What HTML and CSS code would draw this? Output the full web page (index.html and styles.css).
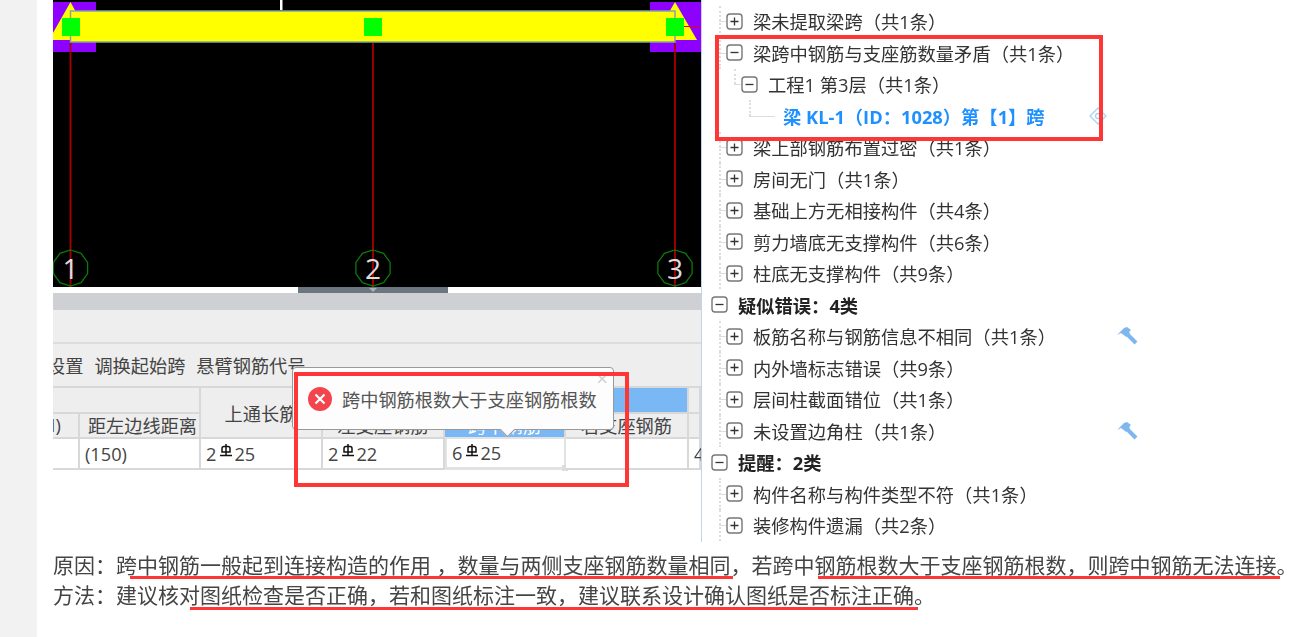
FILE: index.html
```html
<!DOCTYPE html>
<html lang="zh-CN">
<head>
    <meta charset="UTF-8">
    <title>梁跨中钢筋与支座筋数量矛盾</title>
    <link rel="stylesheet" href="styles.css">
</head>
<body>
    <svg class="defs" width="0" height="0">
        <symbol id="plus" viewBox="0 0 17 17">
            <rect x="1" y="1" width="15" height="15" rx="3" fill="#fff" stroke="#777" stroke-width="1.4"/>
            <path d="M4.5 8.5h8M8.5 4.5v8" stroke="#333" stroke-width="1.3"/>
        </symbol>
        <symbol id="minus" viewBox="0 0 17 17">
            <rect x="1" y="1" width="15" height="15" rx="3" fill="#fff" stroke="#777" stroke-width="1.4"/>
            <path d="M4.5 8.5h8" stroke="#333" stroke-width="1.3"/>
        </symbol>
        <symbol id="hammer" viewBox="0 0 21 18">
            <path d="M0 8 L7 1 L10 0 L14 3 L12 5 L13 6 L9 10 L8 9 L4 6 Z" fill="#7db7ee"/>
            <path d="M9 6 L19 16" stroke="#7db7ee" stroke-width="4"/>
        </symbol>
        <symbol id="rebar" viewBox="0 0 14 14">
            <path d="M3 8V4.500Q3 2.500 5 2.500H9Q11 2.500 11 4.500V8H3ZM7 0V11M1 11.500H13" fill="none" stroke="#111" stroke-width="1.500"/>
        </symbol>
        <symbol id="axis-ring" viewBox="-19 -19 38 38">
            <polygon points="0,-18 10.600,-14.600 17.100,-5.600 17.100,5.600 10.600,14.600 0,18 -10.600,14.600 -17.100,5.600 -17.100,-5.600 -10.600,-14.600" fill="none" stroke="#0a7a0a" stroke-width="1.300"/>
        </symbol>
    </svg>

    <div class="strip"></div>

    <div class="main">
        <div class="top">
            <div class="left">
                <svg class="cad" width="648" height="287" viewBox="0 0 648 287">
                    <rect width="648" height="287" fill="#000"/>
                    <rect x="227" width="2.500" height="10" fill="#fff"/>
                    <rect y="2" width="43" height="50" fill="#8e00ff"/>
                    <rect x="597" y="2" width="51" height="50" fill="#8e00ff"/>
                    <path d="M17.500 2 L38 40 H-4 Z" fill="#ff0"/>
                    <path d="M622 2 L644 40 H600 Z" fill="#ff0"/>
                    <rect x="17.500" y="11" width="604.500" height="31" fill="#ff0" stroke="#7fa6a0" stroke-width="1.500"/>
                    <rect x="9" y="18" width="18" height="18" fill="#0f0"/>
                    <rect x="311" y="18" width="18" height="18" fill="#0f0"/>
                    <rect x="613" y="18" width="18" height="18" fill="#0f0"/>
                    <path d="M631 26.500H647" stroke="#e00" stroke-width="1"/>
                    <path d="M17.500 43V287M622 43V287" stroke="#a80000" stroke-width="1.800"/>
                    <path d="M320 43V287" stroke="#ff0000" stroke-width="1.200"/>
                    <use href="#axis-ring" x="-1.500" y="249" width="38" height="38"/>
                    <use href="#axis-ring" x="301" y="249" width="38" height="38"/>
                    <use href="#axis-ring" x="603" y="249" width="38" height="38"/>
                    <g class="axis">
                        <text x="17.500" y="279">1</text>
                        <text x="320" y="279">2</text>
                        <text x="622" y="279">3</text>
                    </g>
                </svg>

                <div class="scroll"><div class="thumb"></div></div>
                <div class="greybar"></div>
                <div class="blank"></div>
                <div class="toolbar">
                    <span class="clip-first">设置</span>
                    <span>调换起始跨</span>
                    <span>悬臂钢筋代号</span>
                </div>

                <div class="table">
                    <div class="cell span2"></div>
                    <div class="cell tall">上通长筋</div>
                    <div class="cell blue span3"></div>
                    <div class="cell"></div>

                    <div class="cell cut"><span>H)</span></div>
                    <div class="cell nudge">距左边线距离</div>
                    <div class="cell">左支座钢筋</div>
                    <div class="cell blue light">跨中钢筋</div>
                    <div class="cell">右支座钢筋</div>
                    <div class="cell"></div>

                    <div class="cell data"></div>
                    <div class="cell data">(150)</div>
                    <div class="cell data">2<svg class="rebar"><use href="#rebar"/></svg>25</div>
                    <div class="cell data">2<svg class="rebar"><use href="#rebar"/></svg>22</div>
                    <div class="cell data picked">6<svg class="rebar"><use href="#rebar"/></svg>25<i class="handle"></i></div>
                    <div class="cell data"></div>
                    <div class="cell data">4</div>
                </div>

                <div class="tip">
                    <svg class="tip-icon" width="24" height="24" viewBox="0 0 24 24">
                        <circle cx="12" cy="12" r="12" fill="#f4454e"/>
                        <path d="M7.500 7.500L16.500 16.500M16.500 7.500L7.500 16.500" stroke="#fff" stroke-width="2.200"/>
                    </svg>
                    <span>跨中钢筋根数大于支座钢筋根数</span>
                    <span class="tip-close">×</span>
                    <i class="tip-arrow"></i>
                </div>
            </div>

            <div class="tree">
                <div class="row l1"><svg class="box"><use href="#plus"/></svg>梁未提取梁跨（共1条）</div>
                <div class="row l1"><svg class="box"><use href="#minus"/></svg>梁跨中钢筋与支座筋数量矛盾（共1条）</div>
                <div class="row l2"><svg class="box"><use href="#minus"/></svg>工程1 第3层（共1条）</div>
                <div class="row l3 link">梁 KL-1（ID：1028）第【1】跨
                    <svg class="locate" width="18" height="18" viewBox="0 0 18 18">
                        <path d="M9 1L17 9L9 17L1 9Z" fill="none" stroke="#a9d0f5" stroke-width="1.300"/>
                        <circle cx="9" cy="9" r="2.500" fill="none" stroke="#a9d0f5" stroke-width="1.300"/>
                    </svg>
                </div>
                <div class="row l1"><svg class="box"><use href="#plus"/></svg>梁上部钢筋布置过密（共1条）</div>
                <div class="row l1"><svg class="box"><use href="#plus"/></svg>房间无门（共1条）</div>
                <div class="row l1"><svg class="box"><use href="#plus"/></svg>基础上方无相接构件（共4条）</div>
                <div class="row l1"><svg class="box"><use href="#plus"/></svg>剪力墙底无支撑构件（共6条）</div>
                <div class="row l1"><svg class="box"><use href="#plus"/></svg>柱底无支撑构件（共9条）</div>
                <div class="row l0"><svg class="box"><use href="#minus"/></svg>疑似错误：4类</div>
                <div class="row l1"><svg class="box"><use href="#plus"/></svg>板筋名称与钢筋信息不相同（共1条）<svg class="fix"><use href="#hammer"/></svg></div>
                <div class="row l1"><svg class="box"><use href="#plus"/></svg>内外墙标志错误（共9条）</div>
                <div class="row l1"><svg class="box"><use href="#plus"/></svg>层间柱截面错位（共1条）</div>
                <div class="row l1"><svg class="box"><use href="#plus"/></svg>未设置边角柱（共1条）<svg class="fix"><use href="#hammer"/></svg></div>
                <div class="row l0"><svg class="box"><use href="#minus"/></svg>提醒：2类</div>
                <div class="row l1"><svg class="box"><use href="#plus"/></svg>构件名称与构件类型不符（共1条）</div>
                <div class="row l1"><svg class="box"><use href="#plus"/></svg>装修构件遗漏（共2条）</div>
            </div>

            <!-- red markers drawn on top of the screenshot -->
            <div class="mark mark-tip"></div>
            <div class="mark mark-tree"></div>
        </div>

        <div class="notes">
            <p>原因：跨中钢筋一般起到连接构造的作用 ，数量与两侧支座钢筋数量相同，若跨中钢筋根数大于支座钢筋根数，则跨中钢筋无法连接。</p>
            <p>方法：建议核对图纸检查是否正确，若和图纸标注一致，建议联系设计确认图纸是否标注正确。</p>
            <i class="line line-a"></i>
            <i class="line line-b"></i>
            <i class="line line-c"></i>
        </div>
    </div>
</body>
</html>
```

FILE: styles.css
```css
/* General */
html, body {
    height: 637px;
    overflow: hidden;
}

body {
    margin: 0;
    display: flex;
    background-color: #fff;
    color: #333;
    font-family: "Open Sans", "Noto Sans CJK SC", sans-serif;
    font-size: 18.2px;
}

.defs {
    position: absolute;
}

.strip {
    width: 37px;
    background-color: #f2f2f2;
}

.main {
    flex: 1;
    padding-left: 16px;
    filter: blur(0.5px);
}

.top {
    position: relative;
    display: flex;
    height: 542px;
}

/* Left side: drawing and table */
.left {
    position: relative;
    width: 648px;
    flex: none;
    overflow: hidden;
}

.cad {
    display: block;
}

.axis text {
    fill: #ddd;
    font-size: 28px;
    text-anchor: middle;
}

.scroll {
    height: 6px;
    background-color: #fff;
    display: flex;
    justify-content: center;
}

.thumb {
    position: relative;
    width: 150px;
    margin-right: 8px;
    background-color: #6c7680;
}

.thumb::after {
    content: "";
    position: absolute;
    left: 71px;
    top: 1px;
    border: 4px solid transparent;
    border-top-color: #aab0b6;
}

.greybar {
    height: 17px;
    background-color: #cfd0d4;
}

.blank {
    height: 32px;
    background-color: #eee;
    border-bottom: 2px solid #ddd;
}

.toolbar {
    height: 42px;
    display: flex;
    align-items: center;
    gap: 11px;
    background-color: #eee;
    color: #444;
}

.clip-first {
    margin-left: -6px;
}

.table {
    display: grid;
    grid-template-columns: 27px 121px 122px 122px 121px 123px 12px;
    grid-template-rows: 25.5px 25.5px 32.5px;
    background-color: #fff;
    color: #444;
}

.cell {
    display: flex;
    align-items: center;
    justify-content: center;
    white-space: nowrap;
    overflow: hidden;
    background-color: #eee;
    border-top: 2px solid #d8d8d8;
    border-right: 2px solid #d8d8d8;
}

.span2 { grid-column: span 2; }
.span3 { grid-column: span 3; }
.tall { grid-row: span 2; }

.cut {
    justify-content: flex-start;
}

.cut span {
    margin-left: -11px;
}

.nudge {
    padding-left: 6px;
}

.blue {
    background-color: #7ab8f5;
}

.light {
    color: #fff;
}

.data {
    position: relative;
    justify-content: flex-start;
    padding-left: 5px;
    padding-top: 1px;
    background-color: #fff;
    border-bottom: 2px solid #d8d8d8;
    overflow: visible;
}

.picked {
    border: 2px solid #e2e2e2;
    border-bottom-width: 3px;
}

.handle {
    position: absolute;
    right: -4px;
    bottom: -4px;
    width: 6px;
    height: 6px;
    background-color: #ddd;
}

.rebar {
    width: 14px;
    height: 14px;
    margin: 0 1px 5px 3px;
}

/* Tooltip */
.tip {
    position: absolute;
    left: 239px;
    top: 367px;
    width: 322px;
    height: 63px;
    box-sizing: border-box;
    display: flex;
    align-items: center;
    gap: 10px;
    padding-left: 15px;
    background-color: #fdfdfd;
    border: 1px solid #999;
    border-radius: 4px;
    color: #555;
}

.tip-close {
    position: absolute;
    right: 5px;
    top: -1px;
    color: #ccc;
    font-size: 20px;
    line-height: 24px;
}

.tip-arrow {
    position: absolute;
    left: 209px;
    bottom: -6px;
    width: 10px;
    height: 10px;
    background-color: #fdfdfd;
    border-right: 1px solid #999;
    border-bottom: 1px solid #999;
    transform: rotate(45deg);
}

/* Tree */
.tree {
    flex: 1;
    padding-top: 5.5px;
    border-left: 1px solid #c3d5ee;
}

.row {
    position: relative;
    box-sizing: border-box;
    display: flex;
    align-items: center;
    width: 436px;
    height: 31.5px;
    white-space: nowrap;
    font-size: 18.3px;
}

.box {
    width: 17px;
    height: 17px;
    margin-right: 10px;
    flex: none;
}

.l0 { padding-left: 9px; font-weight: 700; color: #222; }
.l1 { padding-left: 24px; }
.l2 { padding-left: 39px; }
.l3 { padding-left: 81px; }

.l1::before,
.l2::before,
.l3::before {
    content: "";
    position: absolute;
    top: 0;
    height: 100%;
    border-left: 2px dotted #ddd;
}

.l1::before { left: 17px; }
.l2::before { left: 32px; height: 50%; }
.l3::before { left: 47px; height: 50%; }

.l1::after,
.l2::after,
.l3::after {
    content: "";
    position: absolute;
    top: 50%;
    border-top: 1px solid #ddd;
}

.l1::after { left: 17px; width: 7px; }
.l2::after { left: 32px; width: 7px; }
.l3::after { left: 47px; width: 26px; }

.link {
    color: #1e90ff;
    font-weight: 700;
}

.locate {
    margin-left: auto;
    margin-right: 31px;
}

.fix {
    width: 21px;
    height: 18px;
    margin-left: auto;
}

/* Red markers */
.mark {
    position: absolute;
    box-sizing: border-box;
    border: 4px solid #ff3636;
}

.mark-tip {
    left: 241px;
    top: 372px;
    width: 335px;
    height: 115px;
}

.mark-tree {
    left: 662px;
    top: 35px;
    width: 388px;
    height: 106px;
}

/* Notes */
.notes {
    position: relative;
    padding-top: 8px;
    color: #444;
    font-size: 21px;
}

.notes p {
    margin: 0;
    line-height: 30px;
    white-space: nowrap;
}

.line {
    position: absolute;
    height: 3px;
    background-color: #ff3636;
}

.line-a { left: 77px; top: 34px; width: 603px; }
.line-b { left: 765px; top: 34px; width: 462px; }
.line-c { left: 137px; top: 65px; width: 728px; }
```
